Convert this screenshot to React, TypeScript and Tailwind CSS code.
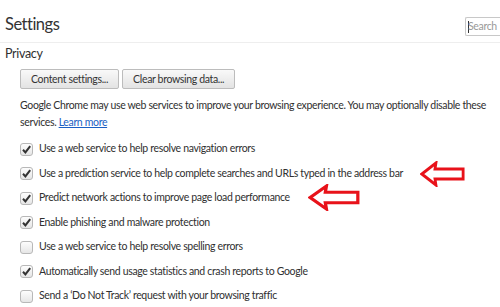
import React from 'react';

const options = [
  { label: 'Use a web service to help resolve navigation errors', checked: true },
  { label: 'Use a prediction service to help complete searches and URLs typed in the address bar', checked: true },
  { label: 'Predict network actions to improve page load performance', checked: true },
  { label: 'Enable phishing and malware protection', checked: true },
  { label: 'Use a web service to help resolve spelling errors', checked: false },
  { label: 'Automatically send usage statistics and crash reports to Google', checked: true },
  { label: "Send a \u2018Do Not Track\u2019 request with your browsing traffic", checked: false },
];

const CheckBox: React.FC<{ checked: boolean }> = ({ checked }) => (
  <span className="relative w-[13px] h-[13px] shrink-0 rounded-[3px] border border-[#b8b8b8] bg-gradient-to-b from-[#fdfdfd] to-[#e6e6e6]">
    {checked && (
      <svg viewBox="0 0 13 13" className="absolute -left-px -top-px w-[13px] h-[13px]">
        <path d="M3 6.8 L5.4 9.4 L10.2 3.2" fill="none" stroke="#333" strokeWidth="2" />
      </svg>
    )}
  </span>
);

const Arrow: React.FC<{ className: string }> = ({ className }) => (
  <svg viewBox="0 0 48 26" preserveAspectRatio="none" className={className}>
    <polygon
      points="2,13 17,2 16,8 46,8 46,18 16,18 17,24"
      fill="none"
      stroke="#e8121a"
      strokeWidth="3"
      strokeLinejoin="miter"
    />
  </svg>
);

export default function App() {
  return (
    <div className="relative w-[500px] h-[307px] overflow-hidden bg-white text-[10.5px] tracking-[-0.34px] text-[#303030] font-['Segoe_UI','Lato',sans-serif]">
      <div className="flex items-start justify-between h-[43px] border-b border-[#eeeeee]">
        <h1 className="pl-[5px] pt-[13px] text-[16.5px] leading-[22px] tracking-[-0.5px] text-[#333]">Settings</h1>
        <div className="mt-[17px] w-[35px] h-[19px] border border-r-0 border-[#c8c8c8] rounded-l-[2px] flex items-center pl-[2px] text-[10.5px] text-[#999] overflow-hidden">
          <span className="w-px h-[12px] bg-[#333] mr-[-1px] shrink-0" />
          <span>Search</span>
        </div>
      </div>

      <div className="pl-[5px] pt-[3px] text-[12.5px] leading-[16px]">Privacy</div>

      <div className="pl-[20px] pt-[7px] flex gap-[3px]">
        <button className="h-[20px] px-[10px] rounded-[2px] border border-[#bcbcbc] bg-gradient-to-b from-[#f9f9f9] to-[#e3e3e3] leading-[16px] text-[#333]">
          Content settings...
        </button>
        <button className="h-[20px] px-[10px] rounded-[2px] border border-[#bcbcbc] bg-gradient-to-b from-[#f9f9f9] to-[#e3e3e3] leading-[16px] text-[#333]">
          Clear browsing data...
        </button>
      </div>

      <p className="pl-[20px] pr-[2px] pt-[8px] leading-[17px]">
        Google Chrome may use web services to improve your browsing experience. You may optionally disable these services.{' '}
        <a className="text-[#1a5fc4] underline">Learn more</a>
      </p>

      <div className="pl-[20px] pt-[6px] flex flex-col">
        {options.map((o) => (
          <label key={o.label} className="flex items-center gap-[6px] h-[24.5px]">
            <CheckBox checked={o.checked} />
            <span>{o.label}</span>
          </label>
        ))}
      </div>

      <Arrow className="absolute left-[420px] top-[161px] w-[45px] h-[26px]" />
      <Arrow className="absolute left-[308px] top-[184px] w-[52px] h-[27px]" />
    </div>
  );
}
